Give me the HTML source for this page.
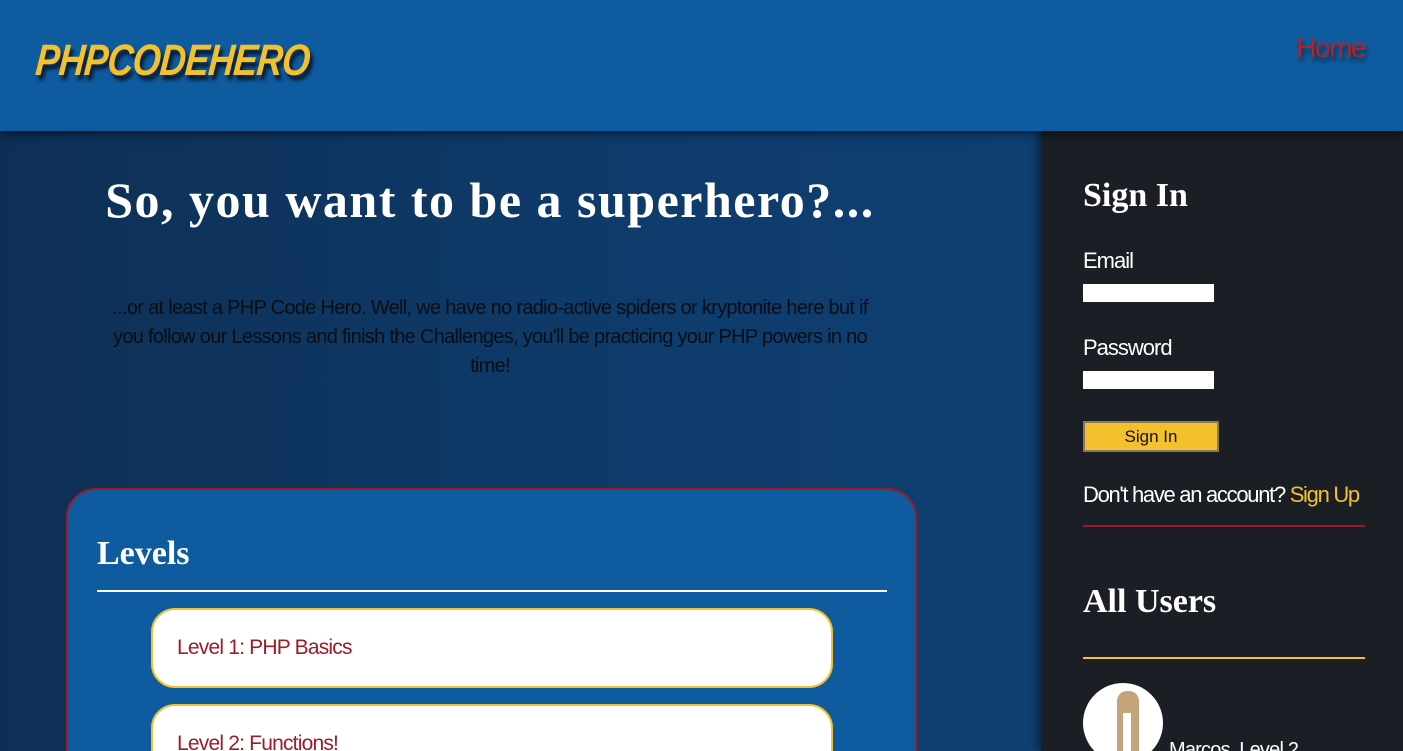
<!DOCTYPE html>
<html style="width:1403px;height:751px;overflow:hidden"><head><meta charset="utf-8"><style>
*{margin:0;padding:0;box-sizing:border-box}
body{width:1403px;height:751px;overflow:hidden;font-family:"Liberation Sans",sans-serif;background:#0e3560;position:relative}
.hdr{position:absolute;left:0;top:0;width:1403px;height:131px;background:#0e5b9f;box-shadow:0 3px 8px rgba(0,0,0,.5);z-index:3}
.logo{position:absolute;left:38px;top:36px;font:italic 900 44px "Liberation Sans",sans-serif;color:#f3c12e;letter-spacing:-1px;text-shadow:4px 5px 4px #0a1a30;transform-origin:0 0;transform:scaleX(.82) skewX(-6deg);}
.home{position:absolute;right:38px;top:32px;font-size:28px;color:#b0232c;text-shadow:2px 4px 4px rgba(0,0,0,.5);letter-spacing:-1.5px}
.main{position:absolute;left:0;top:131px;width:1041px;height:620px;overflow:hidden;background:linear-gradient(90deg,#0e2f55,#0e3b6b 60%,#0e3f72)}
h1{position:absolute;left:0;width:980px;top:40px;text-align:center;font:700 50px "Liberation Serif",serif;color:#fff;letter-spacing:1.5px}
.p{position:absolute;left:110px;width:760px;top:163px;text-align:center;font-size:20px;line-height:29px;color:#0a0e14;letter-spacing:-.7px}
.box{position:absolute;left:66px;top:357px;width:851px;height:300px;background:#0e5b9f;border:2px solid #9c1c26;border-radius:30px}
.box h2{position:absolute;left:29px;top:45px;font:700 34px "Liberation Serif",serif;color:#fff}
.box .ln{position:absolute;left:29px;top:100px;width:790px;border-top:2px solid #fff}
.lv{position:absolute;left:83px;width:682px;height:80px;background:#fff;border:2px solid #f3c12e;border-radius:24px;font-size:21px;color:#9c1c26;padding:26px 0 0 24px;letter-spacing:-.8px}
.side{position:absolute;left:1041px;top:131px;width:362px;height:620px;overflow:hidden;background:#1b1e25;box-shadow:-4px 0 8px rgba(0,0,0,.4)}
.s{position:absolute;left:42px;color:#fff;white-space:nowrap}
.inp{position:absolute;left:42px;width:131px;height:18px;background:#fff}
</style></head><body>
<div class="hdr"><div class="logo">PHPCODEHERO</div><div class="home">Home</div></div>
<div class="main">
<h1>So, you want to be a superhero?...</h1>
<div class="p">...or at least a PHP Code Hero. Well, we have no radio-active spiders or kryptonite here but if you follow our Lessons and finish the Challenges, you'll be practicing your PHP powers in no time!</div>
<div class="box"><h2>Levels</h2><div class="ln"></div>
<div class="lv" style="top:118px">Level 1: PHP Basics</div>
<div class="lv" style="top:214px">Level 2: Functions!</div></div>
</div>
<div class="side">
<div class="s" style="top:46px;font:700 34px 'Liberation Serif',serif">Sign In</div>
<div class="s" style="top:117px;font-size:22px;letter-spacing:-1px">Email</div>
<div class="inp" style="top:153px"></div>
<div class="s" style="top:204px;font-size:22px;letter-spacing:-1px">Password</div>
<div class="inp" style="top:240px"></div>
<div style="position:absolute;left:42px;top:290px;width:136px;height:31px;background:#f3c12e;border:2px solid #8a7a50;text-align:center;font-size:17px;line-height:27px;color:#111">Sign In</div>
<div class="s" style="top:351px;font-size:22px;letter-spacing:-1.3px">Don't have an account? <span style="color:#f3c12e">Sign Up</span></div>
<div style="position:absolute;left:42px;top:394px;width:282px;border-top:2px solid #9c1c26"></div>
<div class="s" style="top:452px;font:700 34px 'Liberation Serif',serif">All Users</div>
<div style="position:absolute;left:42px;top:526px;width:282px;border-top:2px solid #f3c12e"></div>
<div style="position:absolute;left:42px;top:552px;width:80px;height:80px;border-radius:50%;background:#fff;overflow:hidden"><div style="position:absolute;left:34px;top:8px;width:22px;height:72px;background:#c4a47a;border-radius:10px 10px 0 0"></div><div style="position:absolute;left:40px;top:30px;width:8px;height:50px;background:#fff"></div></div>
<div class="s" style="left:128px;top:608px;font-size:20px;letter-spacing:-.8px">Marcos, Level 2</div>
</div>
</body></html>
